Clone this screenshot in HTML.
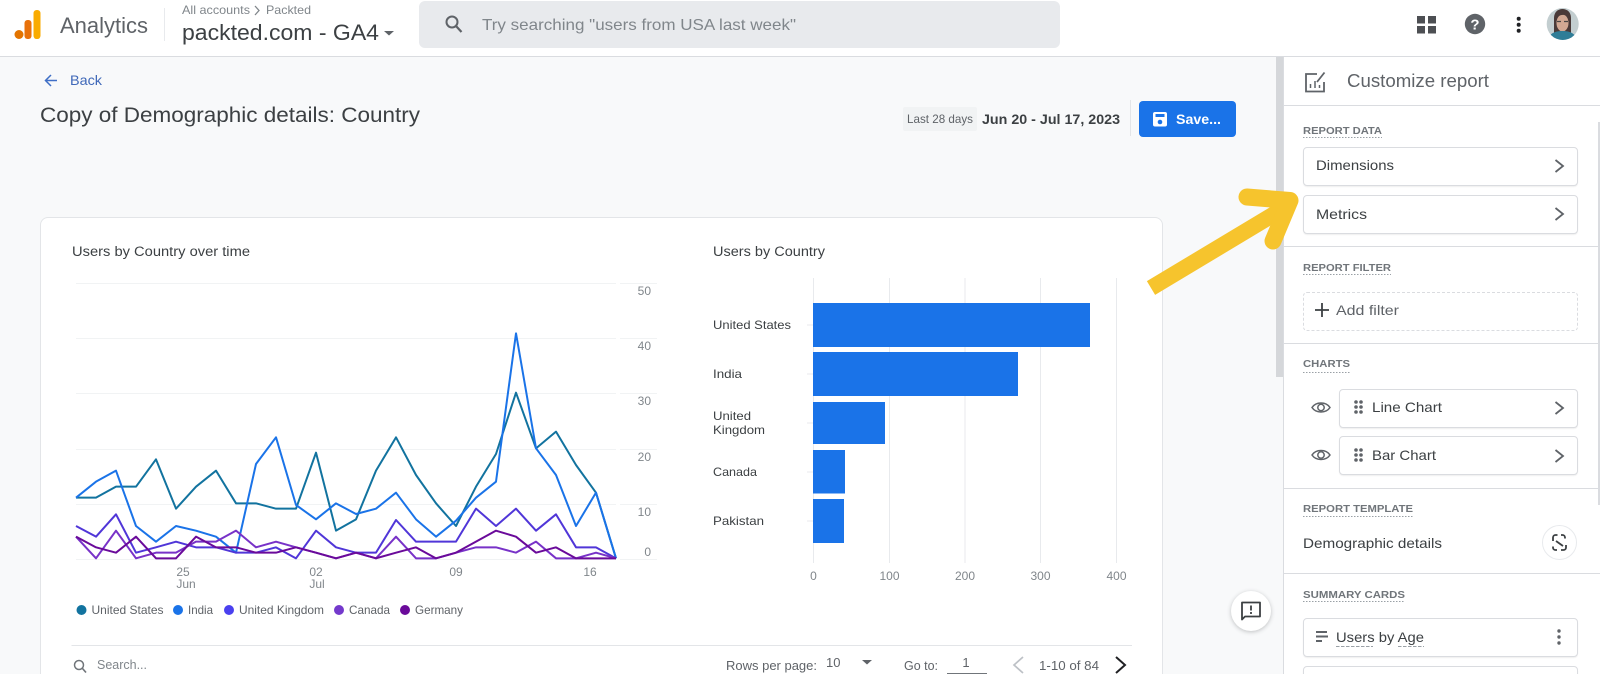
<!DOCTYPE html>
<html lang="en">
<head>
<meta charset="utf-8">
<title>Analytics - Customize report</title>
<style>
html,body{margin:0;padding:0;width:1600px;height:674px;overflow:hidden;background:#f8f9fa;font-family:"Liberation Sans",sans-serif}
#wrap{position:relative;width:1600px;height:674px;overflow:hidden;background:#f8f9fa;filter:blur(.35px)}
.a{position:absolute;box-sizing:border-box}
.box{background:#fff;border:1px solid #dadce0;border-radius:4px;box-shadow:0 1px 1px rgba(60,64,67,.08)}
.hr{background:#dadce0;height:1px;left:1283px;width:317px}
svg{position:absolute;left:0;top:0}
text{font-family:"Liberation Sans",sans-serif}
</style>
</head>
<body>
<div id="wrap">
<div class="a" style="left:0;top:0;width:1600px;height:57px;background:#fff;border-bottom:1px solid #dadce0"></div>
<div class="a" style="left:164px;top:8px;width:1px;height:33px;background:#e8eaed"></div>
<div class="a" style="left:419px;top:1px;width:641px;height:47px;background:#e8eaed;border-radius:6px"></div>
<div class="a" style="left:1276px;top:57px;width:7px;height:320px;background:#d5d7da"></div>
<div class="a" style="left:1283px;top:57px;width:317px;height:617px;background:#fff;border-left:1px solid #dadce0"></div>
<div class="a" style="left:1598px;top:122px;width:2px;height:383px;background:#dadce0"></div>
<div class="a hr" style="top:105px"></div>
<div class="a hr" style="top:246px"></div>
<div class="a hr" style="top:343px"></div>
<div class="a hr" style="top:488px"></div>
<div class="a hr" style="top:573px"></div>
<div class="a box" style="left:1303px;top:147px;width:275px;height:39px"></div>
<div class="a box" style="left:1303px;top:195px;width:275px;height:39px"></div>
<div class="a" style="left:1303px;top:292px;width:275px;height:39px;background:#fff;border:1px dashed #dadce0;border-radius:4px"></div>
<div class="a box" style="left:1339px;top:389px;width:239px;height:39px"></div>
<div class="a box" style="left:1339px;top:436px;width:239px;height:39px"></div>
<div class="a" style="left:1542px;top:525px;width:35px;height:35px;border:1px solid #e8eaed;border-radius:50%;background:#fff"></div>
<div class="a box" style="left:1303px;top:618px;width:275px;height:39px"></div>
<div class="a box" style="left:1303px;top:666px;width:275px;height:39px"></div>
<div class="a" style="left:40px;top:217px;width:1123px;height:480px;background:#fff;border:1px solid #e3e5e8;border-radius:8px"></div>
<div class="a" style="left:903px;top:107px;width:74px;height:24px;background:#f1f3f4;border-radius:2px"></div>
<div class="a" style="left:1130px;top:100px;width:1px;height:36px;background:#e3e5e8"></div>
<div class="a" style="left:1139px;top:101px;width:97px;height:36px;background:#1a73e8;border-radius:4px"></div>
<div class="a" style="left:1231px;top:591px;width:40px;height:40px;background:#fff;border-radius:50%;box-shadow:0 1px 4px rgba(60,64,67,.3)"></div>

<svg width="1600" height="674" viewBox="0 0 1600 674" xmlns="http://www.w3.org/2000/svg">
<!-- logo -->
<circle cx="19" cy="34.5" r="4.5" fill="#e37400"/>
<rect x="24.500" y="20" width="7" height="19" rx="3" fill="#e8710a"/>
<rect x="33.500" y="10" width="7" height="29" rx="3.200" fill="#f9ab00"/>
<text x="60" y="33" font-size="22" fill="#5f6368" textLength="88" lengthAdjust="spacingAndGlyphs">Analytics</text>
<text x="182" y="14" font-size="12" fill="#80868b" textLength="68" lengthAdjust="spacingAndGlyphs">All accounts</text>
<path d="M255 6l4 4.500-4 4.500" fill="none" stroke="#80868b" stroke-width="1.300"/>
<text x="266" y="14" font-size="12" fill="#80868b" textLength="45" lengthAdjust="spacingAndGlyphs">Packted</text>
<text x="182" y="40" font-size="22" fill="#3c4043" textLength="197" lengthAdjust="spacingAndGlyphs">packted.com - GA4</text>
<path d="M384 31h10l-5 4.500z" fill="#5f6368"/>
<!-- search -->
<circle cx="452" cy="22" r="5.500" fill="none" stroke="#5f6368" stroke-width="2"/>
<path d="M456 26l5.500 6" stroke="#5f6368" stroke-width="2.200"/>
<text x="482" y="30" font-size="16" fill="#80868b" textLength="314" lengthAdjust="spacingAndGlyphs">Try searching "users from USA last week"</text>
<!-- right icons -->
<g fill="#4d4f53"><rect x="1417" y="16" width="8" height="7.500"/><rect x="1428" y="16" width="8" height="7.500"/><rect x="1417" y="26" width="8" height="7.500"/><rect x="1428" y="26" width="8" height="7.500"/></g>
<circle cx="1475" cy="24" r="10.200" fill="#5f6368"/>
<text x="1475" y="29.500" font-size="15" font-weight="bold" fill="#fff" text-anchor="middle">?</text>
<g fill="#202124"><circle cx="1518.700" cy="18.700" r="2"/><circle cx="1518.700" cy="24.700" r="2"/><circle cx="1518.700" cy="30.700" r="2"/></g>
<!-- avatar -->
<clipPath id="av"><circle cx="1562.700" cy="24" r="16"/></clipPath>
<g clip-path="url(#av)">
<rect x="1546" y="8" width="34" height="32" fill="#c3ced0"/>
<path d="M1554 34V18c0-6 4-9 8.500-9s8.500 3 8.500 9v16z" fill="#4a3a38"/>
<ellipse cx="1562.500" cy="23" rx="6" ry="8.500" fill="#d2a893"/>
<path d="M1556 19c3-5 10-6 13 0l0-5-6-3-6 2z" fill="#4a3a38"/>
<path d="M1557 21.500h4M1564 21.500h4" stroke="#4a4644" stroke-width="1.200"/>
<path d="M1548 40c1-7 8-9 14.500-9s13 2 14.500 9z" fill="#2f7d97"/>
</g>
<!-- back + title -->
<path d="M57 80.500H46M51 75l-5.500 5.500L51 86" fill="none" stroke="#3f6fc6" stroke-width="1.500"/>
<text x="70" y="85" font-size="14" fill="#3f68b8" textLength="32" lengthAdjust="spacingAndGlyphs">Back</text>
<text x="40" y="122" font-size="21" fill="#3c4043" textLength="380" lengthAdjust="spacingAndGlyphs">Copy of Demographic details: Country</text>
<text x="907" y="123" font-size="12" fill="#5f6368" textLength="66" lengthAdjust="spacingAndGlyphs">Last 28 days</text>
<text x="982" y="124" font-size="14" font-weight="bold" fill="#3c4043" textLength="138" lengthAdjust="spacingAndGlyphs">Jun 20 - Jul 17, 2023</text>
<!-- save -->
<rect x="1153" y="112" width="14" height="14.500" rx="2" fill="#fff"/>
<rect x="1155.500" y="114" width="9" height="3" fill="#1a73e8"/>
<circle cx="1160" cy="122" r="2.300" fill="#1a73e8"/>
<text x="1176" y="124" font-size="14" font-weight="bold" fill="#fff" textLength="45" lengthAdjust="spacingAndGlyphs">Save...</text>
<!-- customize -->
<path d="M1317 74h-11v17.500h18V82" fill="none" stroke="#5f6368" stroke-width="1.800"/>
<path d="M1310.500 88v-4M1315 88v-7M1319.500 88v-3" stroke="#5f6368" stroke-width="1.500"/>
<path d="M1317 82l7.500-9.500" stroke="#5f6368" stroke-width="1.800"/>
<text x="1347" y="87" font-size="18" fill="#5f6368" textLength="142" lengthAdjust="spacingAndGlyphs">Customize report</text>
<!-- sidebar labels -->
<g font-size="10.500" font-weight="bold" fill="#70757a">
<text x="1303" y="134" textLength="79" lengthAdjust="spacingAndGlyphs">REPORT DATA</text>
<text x="1303" y="271" textLength="88" lengthAdjust="spacingAndGlyphs">REPORT FILTER</text>
<text x="1303" y="367" textLength="47" lengthAdjust="spacingAndGlyphs">CHARTS</text>
<text x="1303" y="512" textLength="110" lengthAdjust="spacingAndGlyphs">REPORT TEMPLATE</text>
<text x="1303" y="598" textLength="102" lengthAdjust="spacingAndGlyphs">SUMMARY CARDS</text>
</g>
<g stroke="#9aa0a6" stroke-width="1" stroke-dasharray="1.500 1.500">
<path d="M1303 137.500h79M1303 274.500h88M1303 372.500h47M1303 516.500h110M1303 601.500h102"/>
</g>
<g font-size="14" fill="#3c4043">
<text x="1316" y="170" textLength="78" lengthAdjust="spacingAndGlyphs">Dimensions</text>
<text x="1316" y="219" textLength="51" lengthAdjust="spacingAndGlyphs">Metrics</text>
<text x="1336" y="315" fill="#5f6368" textLength="63" lengthAdjust="spacingAndGlyphs">Add filter</text>
<text x="1372" y="412" textLength="70" lengthAdjust="spacingAndGlyphs">Line Chart</text>
<text x="1372" y="460" textLength="64" lengthAdjust="spacingAndGlyphs">Bar Chart</text>
<text x="1303" y="548" textLength="139" lengthAdjust="spacingAndGlyphs">Demographic details</text>
<text x="1336" y="642" textLength="88" lengthAdjust="spacingAndGlyphs">Users by Age</text>
</g>
<path d="M1336 646.500h37M1398 646.500h26" stroke="#9aa0a6" stroke-dasharray="3.500 1.500"/>
<g fill="none" stroke="#5f6368" stroke-width="1.800">
<path d="M1555.500 160l7.500 6-7.500 6M1555.500 208l7.500 6-7.500 6M1555.500 402l7.500 6-7.500 6M1555.500 450l7.500 6-7.500 6"/>
<path d="M1322 303v14M1315 310h14" stroke="#3c4043"/>
<path d="M1312 407.500c4-6 14-6 18 0-4 6-14 6-18 0zM1312 455c4-6 14-6 18 0-4 6-14 6-18 0z" stroke-width="1.500"/>
<circle cx="1321" cy="407.500" r="3.200" stroke-width="1.500"/><circle cx="1321" cy="455" r="3.200" stroke-width="1.500"/>
<path d="M1553 541v-3.500a2.500 2.500 0 0 1 2.500-2.500h2M1561 535h1.500a2.500 2.500 0 0 1 2.500 2.500v1M1566 545v2.500a2.500 2.500 0 0 1-2.500 2.500H1561M1557 550h-1.500a2.500 2.500 0 0 1-2.500-2.500v-1M1556 541l7 5" stroke="#3c4043"/>
</g>
<g fill="#5f6368">
<circle cx="1356" cy="402" r="1.800"/><circle cx="1361" cy="402" r="1.800"/><circle cx="1356" cy="407" r="1.800"/><circle cx="1361" cy="407" r="1.800"/><circle cx="1356" cy="412" r="1.800"/><circle cx="1361" cy="412" r="1.800"/>
<circle cx="1356" cy="450" r="1.800"/><circle cx="1361" cy="450" r="1.800"/><circle cx="1356" cy="455" r="1.800"/><circle cx="1361" cy="455" r="1.800"/><circle cx="1356" cy="460" r="1.800"/><circle cx="1361" cy="460" r="1.800"/>
<circle cx="1559" cy="631" r="1.700"/><circle cx="1559" cy="637" r="1.700"/><circle cx="1559" cy="643" r="1.700"/>
<rect x="1316" y="631" width="11" height="2"/><rect x="1316" y="635.500" width="12" height="2"/><rect x="1316" y="640" width="6" height="2"/>
</g>
<!-- chart titles -->
<text x="72" y="256" font-size="13.500" fill="#3c4043" textLength="178" lengthAdjust="spacingAndGlyphs">Users by Country over time</text>
<text x="713" y="256" font-size="13.500" fill="#3c4043" textLength="112" lengthAdjust="spacingAndGlyphs">Users by Country</text>
<!-- line chart grid -->
<g stroke="#f1f3f4" stroke-width="1">
<path d="M76 283.500H616M620 283.500h37M76 338.500H616M620 338.500h37M76 393.500H616M620 393.500h37M76 449.500H616M620 449.500h37M76 504.500H616M620 504.500h37M76 559.500H616M620 559.500h37"/>
</g>
<g font-size="12" fill="#80868b" text-anchor="end">
<text x="651" y="295">50</text><text x="651" y="350">40</text><text x="651" y="405">30</text><text x="651" y="461">20</text><text x="651" y="516">10</text><text x="651" y="556">0</text>
</g>
<g font-size="12" fill="#80868b" text-anchor="middle">
<text x="183" y="576">25</text><text x="186" y="588">Jun</text>
<text x="316" y="576">02</text><text x="317" y="588">Jul</text>
<text x="456" y="576">09</text><text x="590" y="576">16</text>
</g>
<g transform="translate(76,270) scale(20,0.33333)" fill="none" stroke-width="2" stroke-linejoin="round">
<polyline vector-effect="non-scaling-stroke" stroke="#12739f" points="0,683 1,683 2,650 3,650 4,568 5,716 6,650 7,602 8,700 9,700 10,716 11,716 12,548 13,782 14,748 15,602 16,502 17,615 18,700 19,768 20,650 21,552 22,368 23,535 24,485 25,585 26,668 27,865"/>
<polyline vector-effect="non-scaling-stroke" stroke="#1a73e8" points="0,683 1,635 2,602 3,768 4,815 5,768 6,782 7,800 8,848 9,582 10,502 11,705 12,748 13,700 14,732 15,716 16,668 17,748 18,800 19,752 20,683 21,635 22,190 23,535 24,615 25,768 26,668 27,865"/>
<polyline vector-effect="non-scaling-stroke" stroke="#5036d8" points="0,768 1,800 2,733 3,848 4,832 5,815 6,832 7,832 8,848 9,848 10,832 11,865 12,782 13,832 14,848 15,848 16,750 17,815 18,815 19,815 20,716 21,768 22,716 23,782 24,733 25,832 26,832 27,865"/>
<polyline vector-effect="non-scaling-stroke" stroke="#7832c8" points="0,800 1,865 2,782 3,865 4,848 5,848 6,815 7,815 8,782 9,832 10,815 11,832 12,848 13,865 14,848 15,865 16,800 17,865 18,865 19,848 20,832 21,832 22,848 23,815 24,865 25,865 26,848 27,865"/>
<polyline vector-effect="non-scaling-stroke" stroke="#6a0a9a" points="0,800 1,832 2,848 3,800 4,865 5,865 6,800 7,832 8,832 9,848 10,848 11,832 12,848 13,865 14,848 15,865 16,848 17,832 18,865 19,848 20,815 21,782 22,800 23,848 24,832 25,865 26,865 27,865"/>
</g>
<!-- legend -->
<circle cx="81.500" cy="610" r="5" fill="#12739f"/><circle cx="178" cy="610" r="5" fill="#1a73e8"/><circle cx="229" cy="610" r="5" fill="#4a40ef"/><circle cx="339" cy="610" r="5" fill="#7439cc"/><circle cx="405" cy="610" r="5" fill="#6a0a9a"/>
<g font-size="12" fill="#5f6368">
<text x="91.500" y="614" textLength="72" lengthAdjust="spacingAndGlyphs">United States</text>
<text x="188" y="614" textLength="25" lengthAdjust="spacingAndGlyphs">India</text>
<text x="239" y="614" textLength="85" lengthAdjust="spacingAndGlyphs">United Kingdom</text>
<text x="349" y="614" textLength="41" lengthAdjust="spacingAndGlyphs">Canada</text>
<text x="415" y="614" textLength="48" lengthAdjust="spacingAndGlyphs">Germany</text>
</g>
<!-- bar chart -->
<path d="M813.500 278V563M889.500 278V563M965 278V563M1040.500 278V563M1116.500 278V563" stroke="#e8eaed" stroke-width="1"/>
<path d="M807 325h6M807 374h6M807 423h6M807 472h6M807 521h6" stroke="#e8eaed"/>
<g fill="#1a73e8">
<rect x="813" y="303" width="277" height="44"/>
<rect x="813" y="352" width="205" height="44"/>
<rect x="813" y="402" width="72" height="42"/>
<rect x="813" y="450" width="32" height="43.500"/>
<rect x="813" y="499" width="31" height="44"/>
</g>
<g font-size="12" fill="#3c4043">
<text x="713" y="329" textLength="78" lengthAdjust="spacingAndGlyphs">United States</text>
<text x="713" y="378" textLength="29" lengthAdjust="spacingAndGlyphs">India</text>
<text x="713" y="420" textLength="38" lengthAdjust="spacingAndGlyphs">United</text>
<text x="713" y="434" textLength="52" lengthAdjust="spacingAndGlyphs">Kingdom</text>
<text x="713" y="476" textLength="44" lengthAdjust="spacingAndGlyphs">Canada</text>
<text x="713" y="525" textLength="51" lengthAdjust="spacingAndGlyphs">Pakistan</text>
</g>
<g font-size="12" fill="#80868b" text-anchor="middle">
<text x="813.500" y="580">0</text><text x="889.500" y="580">100</text><text x="965" y="580">200</text><text x="1040.500" y="580">300</text><text x="1116.500" y="580">400</text>
</g>
<!-- table toolbar -->
<path d="M71.500 645.500H1132" stroke="#e3e5e8"/>
<circle cx="79" cy="665" r="4.500" fill="none" stroke="#70757a" stroke-width="1.500"/>
<path d="M82.500 668.500l3.500 4" stroke="#70757a" stroke-width="1.700"/>
<g font-size="13" fill="#5f6368">
<text x="97" y="669" fill="#80868b" textLength="50" lengthAdjust="spacingAndGlyphs">Search...</text>
<text x="726" y="670" textLength="91" lengthAdjust="spacingAndGlyphs">Rows per page:</text>
<text x="826" y="667">10</text>
<text x="904" y="670" textLength="34" lengthAdjust="spacingAndGlyphs">Go to:</text>
<text x="966" y="667" text-anchor="middle">1</text>
<text x="1039" y="670" textLength="60" lengthAdjust="spacingAndGlyphs">1-10 of 84</text>
</g>
<path d="M862 660h10l-5 4.500z" fill="#5f6368"/>
<path d="M947 673.500h40" stroke="#70757a"/>
<path d="M1023 657l-9 8 9 8" fill="none" stroke="#bdc1c6" stroke-width="1.700"/>
<path d="M1116 657l9 8-9 8" fill="none" stroke="#202124" stroke-width="2"/>
<!-- feedback -->
<path d="M1242 602.500h18v14h-15l-3 3z" fill="none" stroke="#3c4043" stroke-width="1.800" stroke-linejoin="round"/>
<path d="M1251 605.500v5M1251 612v2" stroke="#3c4043" stroke-width="1.800"/>
<!-- arrow -->
<g fill="none" stroke="#f6c42d">
<path d="M1151 288L1286 207" stroke-width="16"/>
<path d="M1247 197L1290 200.500L1273 241" stroke-width="17" stroke-linecap="round" stroke-linejoin="round"/>
</g>
</svg>
</div>
</body>
</html>
